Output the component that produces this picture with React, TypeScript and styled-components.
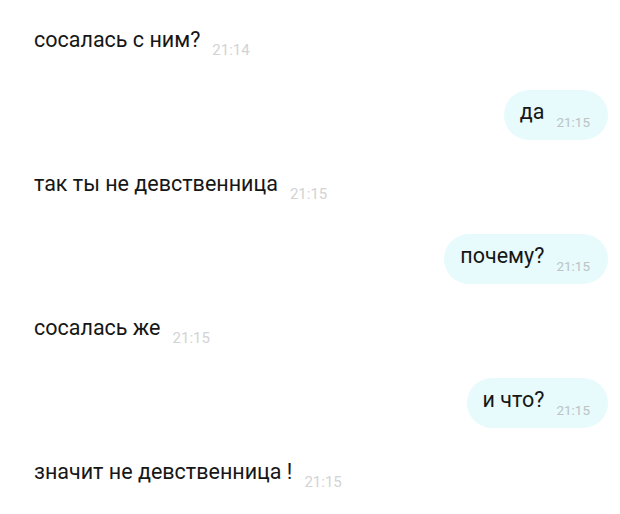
import React from 'react';
import styled, { createGlobalStyle } from 'styled-components'

const GlobalStyle = createGlobalStyle`
    html, body {
        margin: 0;
        padding: 0;
        background: #ffffff;
    }
`

const Chat = styled.div`
    width: 620px;
    height: 514px;
    box-sizing: border-box;
    padding: 18px 12px 0 18px;
    display: flex;
    flex-direction: column;
    gap: 22px;
    font-family: Roboto, "Noto Sans", sans-serif;
    background: #ffffff;
    overflow: hidden;
`

const Row = styled.div<{ $mine?: boolean }>`
    display: flex;
    justify-content: ${p => (p.$mine ? 'flex-end' : 'flex-start')};
`

const Bubble = styled.div<{ $mine?: boolean }>`
    height: 50px;
    box-sizing: border-box;
    padding: 0 18px 6px 16px;
    border-radius: 25px;
    background: ${p => (p.$mine ? '#e7fafc' : 'transparent')};
    line-height: 44px;
    white-space: nowrap;
`

const Text = styled.span`
    font-size: 21.5px;
    color: #161616;
`

const Time = styled.span<{ $mine?: boolean }>`
    margin-left: 12px;
    font-size: ${p => (p.$mine ? '13.5px' : '15px')};
    line-height: 1;
    color: ${p => (p.$mine ? '#bcc2c5' : '#d2d3d4')};
    vertical-align: -8px;
`

const messages = [
    { text: 'сосалась с ним?', time: '21:14', mine: false },
    { text: 'да', time: '21:15', mine: true },
    { text: 'так ты не девственница', time: '21:15', mine: false },
    { text: 'почему?', time: '21:15', mine: true },
    { text: 'сосалась же', time: '21:15', mine: false },
    { text: 'и что?', time: '21:15', mine: true },
    { text: 'значит не девственница !', time: '21:15', mine: false },
]

function App() {
    return (
        <React.Fragment>
            <GlobalStyle />
            <Chat>
                {messages.map((m, i) => (
                    <Row key={i} $mine={m.mine}>
                        <Bubble $mine={m.mine}>
                            <Text>{m.text}</Text>
                            <Time $mine={m.mine}>{m.time}</Time>
                        </Bubble>
                    </Row>
                ))}
            </Chat>
        </React.Fragment>
    );
}

export default App;
